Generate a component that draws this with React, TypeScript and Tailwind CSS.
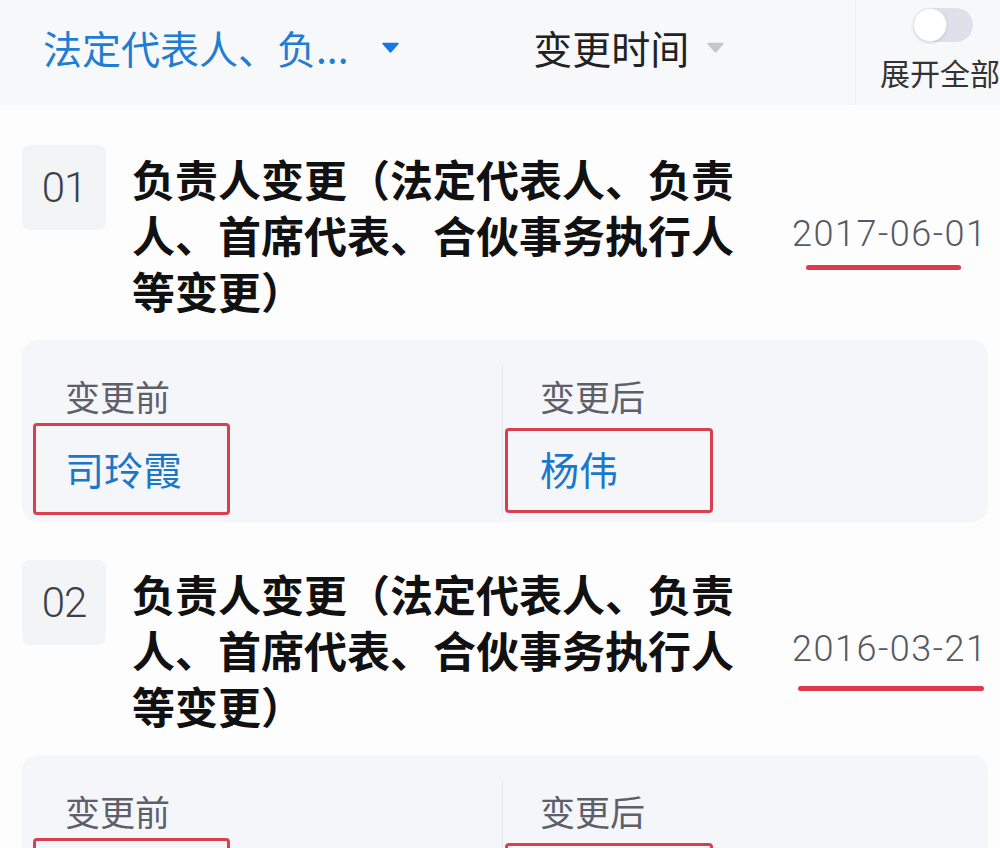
import React from "react";

type ChangeRecord = {
    no: string;
    title: string;
    date: string;
    before: string;
    after: string;
    mark: string;
};

const RECORDS: ChangeRecord[] = [
    {
        no: "01",
        title: "负责人变更（法定代表人、负责人、首席代表、合伙事务执行人等变更）",
        date: "2017-06-01",
        before: "司玲霞",
        after: "杨伟",
        mark: "left-[14px] top-[55px] w-[155px]",
    },
    {
        no: "02",
        title: "负责人变更（法定代表人、负责人、首席代表、合伙事务执行人等变更）",
        date: "2016-03-21",
        before: "",
        after: "",
        mark: "left-[6px] top-[61px] w-[186px]",
    },
];

function Caret({ color }: { color: string }) {
    return (
        <svg width="17" height="11" viewBox="0 0 17 11" className="shrink-0">
            <path d="M1 1.5 L16 1.5 L8.5 10 Z" fill={color} stroke={color} strokeWidth="1.5" strokeLinejoin="round" />
        </svg>
    );
}

function Record({ rec, first }: { rec: ChangeRecord; first: boolean }) {
    return (
        <section className={first ? "pt-[40px]" : "pt-[38px]"}>
            <div className="flex items-start">
                <div className="ml-[22px] w-[84px] h-[85px] rounded-lg bg-[#f3f4f6] flex items-center justify-center font-['Roboto','Noto_Sans_CJK_SC',sans-serif] font-light text-[42px] text-[#3c4048] tracking-[-1px]">
                    {rec.no}
                </div>
                <div className="mt-[5px] flex items-center">
                    <h3 className="ml-[26px] w-[610px] text-[43px] leading-[56px] font-bold text-[#111]">
                        {rec.title}
                    </h3>
                    <span className="relative ml-[50px] font-['Roboto','Noto_Sans_CJK_SC',sans-serif] font-light text-[36px] leading-[48px] tracking-[1.5px] text-[#555a63]">
                        {rec.date}
                        <span className={`absolute h-[5px] rounded-full bg-[#df3a4b] ${rec.mark}`} />
                    </span>
                </div>
            </div>

            <div className="ml-[22px] mr-[12px] mt-[22px] flex rounded-2xl bg-[#f4f6fa] h-[182px]">
                <div className="w-[480px] pl-[43px] pt-[32px]">
                    <div className="text-[35px] leading-[48px] text-[#5d6068]">变更前</div>
                    <div className="relative mt-[20px] text-[39px] leading-[56px] text-[#1b76cc] w-fit">
                        {rec.before || "\u00a0"}
                        <span className="absolute left-[-32px] top-[-17px] w-[197px] h-[92px] rounded-[4px] border-[3px] border-[#d8404f]" />
                    </div>
                </div>
                <div className="w-px bg-[#e8eaef] mt-[25px] mb-[7px]" />
                <div className="flex-1 pl-[37px] pt-[32px]">
                    <div className="text-[35px] leading-[48px] text-[#5d6068]">变更后</div>
                    <div className="relative mt-[20px] text-[39px] leading-[56px] text-[#1b76cc] w-fit">
                        {rec.after || "\u00a0"}
                        <span className="absolute left-[-35px] top-[-12px] w-[208px] h-[85px] rounded-[4px] border-[3px] border-[#d8404f]" />
                    </div>
                </div>
            </div>
        </section>
    );
}

export default function App() {
    return (
        <main className="w-[1000px] h-[848px] overflow-hidden bg-[#fdfdfe] font-['Noto_Sans_CJK_SC',sans-serif]">
            <header className="h-[105px] bg-[#f7f8fa] flex">
                <div className="w-[535px] pl-[43px] flex items-center gap-[33px] pb-[10px]">
                    <span className="text-[39px] text-[#1f7dd3] whitespace-nowrap">法定代表人、负...</span>
                    <Caret color="#1677e5" />
                </div>
                <div className="w-[323px] flex items-center gap-[18px] pb-[10px]">
                    <span className="text-[39px] text-[#222]">变更时间</span>
                    <Caret color="#c4c7cc" />
                </div>
                <div className="flex-1 border-l border-[#eef0f3] flex flex-col pt-[8px]">
                    <div className="ml-[57px] w-[60px] h-[34px] rounded-full bg-[#dde2ea]">
                        <div className="w-[34px] h-[34px] rounded-full bg-white border border-[#e3e6eb] shadow-sm" />
                    </div>
                    <span className="ml-[24px] mt-[10px] text-[30px] leading-[40px] text-[#333] whitespace-nowrap">展开全部</span>
                </div>
            </header>

            {RECORDS.map((rec, i) => (
                <Record key={rec.no} rec={rec} first={i === 0} />
            ))}
        </main>
    );
}
